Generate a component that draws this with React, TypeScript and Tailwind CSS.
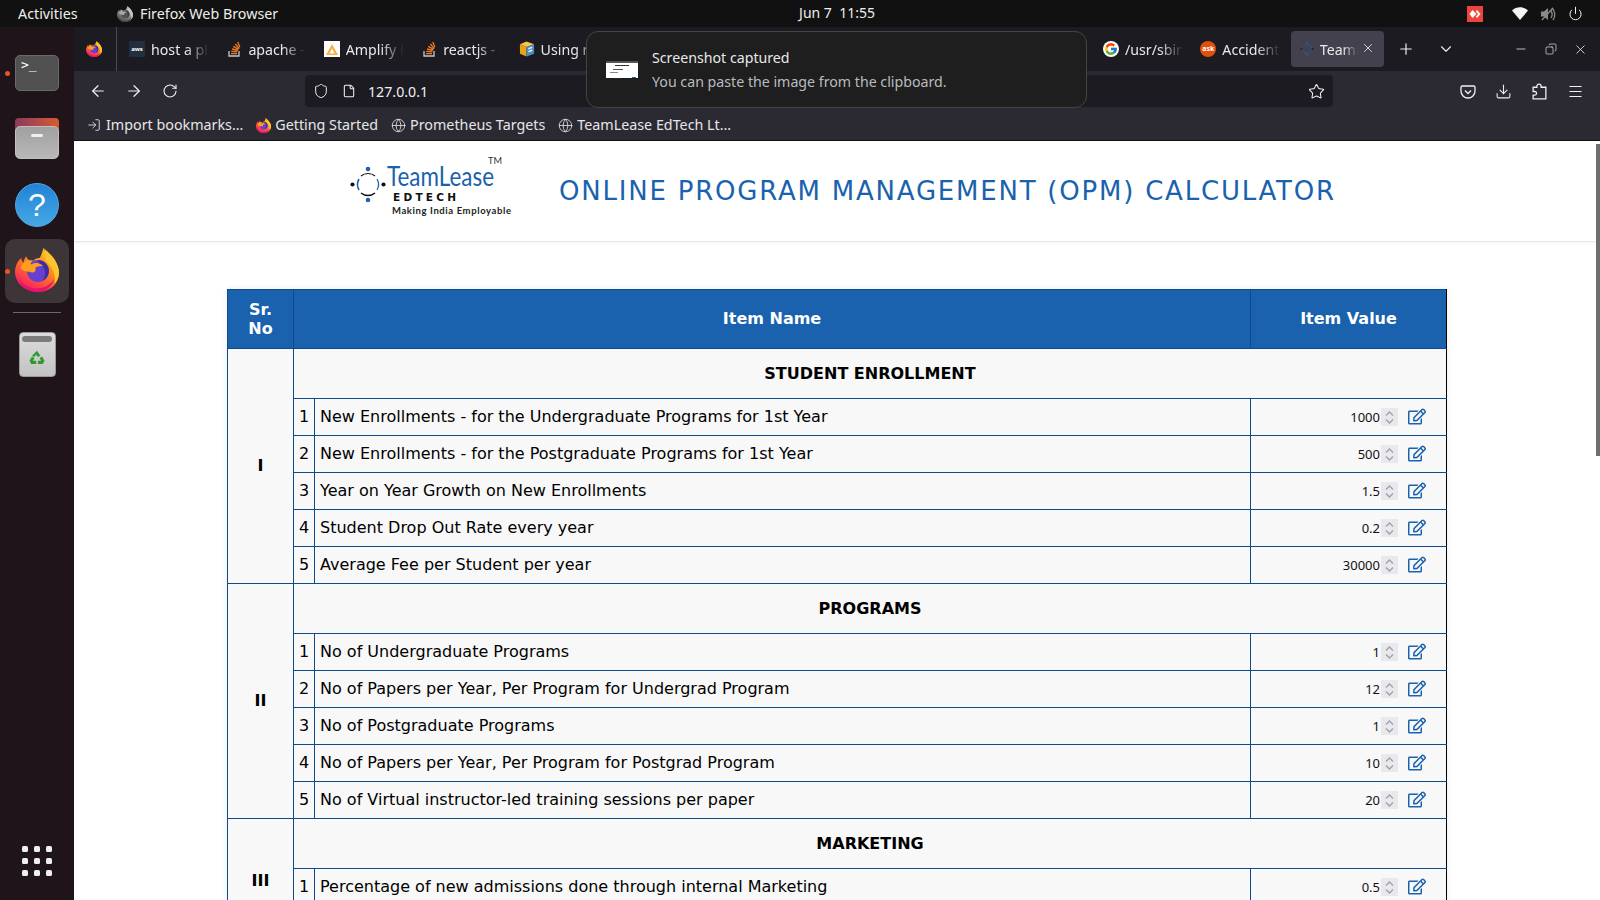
import React from "react";
import { ArrowLeft, ArrowRight, RotateCw, Shield, File, Star, Download, Menu, Globe, X, Plus, ChevronDown, Minus, Copy, LogIn, Power } from "lucide-react";
import { FaRegEdit } from "react-icons/fa";
import { FcGoogle } from "react-icons/fc";

const ui = "font-['Noto_Sans','Open_Sans',sans-serif]";

function FirefoxIcon({ size = 16, muted = false }: { size?: number; muted?: boolean }) {
  return (
    <svg width={size} height={size} viewBox="0 0 48 48" className={muted ? "grayscale" : ""}>
      <defs>
        <linearGradient id="ffa" x1="0.85" y1="0.05" x2="0.3" y2="1">
          <stop offset="0" stopColor="#ffd02c" />
          <stop offset="0.5" stopColor="#ff7a1f" />
          <stop offset="1" stopColor="#f5156c" />
        </linearGradient>
      </defs>
      <path d="M31 0C32 6 40 10 44 15C47 20 48 24 48 27C48 39 38 48 25 48C11 48 0 38 0 26C0 20 3 14 7 11C7 14 8 15 9 16C10 13 11 11 12 9C13 12 16 14 19 15C21 12 24 11 27 11C29 7 30 4 31 0Z" fill="url(#ffa)" />
      <path d="M31 0C37 5 47 13 48 26C48 32 46 36 43 39C45 30 41 20 33 14C34 9 33 4 31 0Z" fill="#ffc52e" />
      <path d="M3 30C6 40 16 45 26 44C34 43 40 39 43 33C41 42 33 48 25 48C14 48 5 41 3 30Z" fill="#e8116f" />
      <circle cx="25" cy="25" r="12" fill="#6a3fd0" />
      <path d="M25 13A12 12 0 0 1 37 25C37 30 34 34 30 36C34 31 34 23 29 19C27 17 25 16 25 13Z" fill="#2d2a8c" opacity="0.75" />
      <path d="M6 22C8 16 14 12 20 14C18 15 17 16 17 18C22 15 28 16 31 20C27 19 24 20 22 22C24 25 20 28 16 26C11 26 8 24 6 22Z" fill="#ff9f1f" />
    </svg>
  );
}

function Tab({ icon, label }: { icon: React.ReactNode; label: string }) {
  return (
    <div className="w-[97.4px] h-9 shrink-0 flex items-center pl-[7px] overflow-hidden">
      <span className="w-4 h-4 shrink-0 flex items-center justify-center">{icon}</span>
      <span className="ml-[6px] w-[58px] pt-[1px] overflow-hidden whitespace-nowrap text-[14.2px] text-[#e8e8ea] [mask-image:linear-gradient(to_right,black_60%,transparent)]">{label}</span>
    </div>
  );
}

function StackIcon() {
  return (
    <svg width="13" height="16" viewBox="0 0 13 16" fill="none" stroke="#ef7c22" strokeWidth="1.3">
      <path d="M1 10v5h10v-5" stroke="#c9c9c9" />
      <path d="M3 12.6h6M3.2 10.4l6 .5M4 8l5.800 1.500M5.300 5.400l5.200 3M7.400 3l3.800 4.600M9.800 1l2 5.200" />
    </svg>
  );
}

function BookmarkItem({ icon, label }: { icon: React.ReactNode; label: string }) {
  return (
    <div className="flex items-center gap-[4px] text-[14.3px] text-[#e6e6e8] whitespace-nowrap">
      <span className="w-4 h-4 flex items-center justify-center">{icon}</span>
      <span>{label}</span>
    </div>
  );
}

type Row = { name: string; value: string };
type Section = { roman: string; title: string; rows: Row[] };

const sections: Section[] = [
  {
    roman: "I",
    title: "STUDENT ENROLLMENT",
    rows: [
      { name: "New Enrollments - for the Undergraduate Programs for 1st Year", value: "1000" },
      { name: "New Enrollments - for the Postgraduate Programs for 1st Year", value: "500" },
      { name: "Year on Year Growth on New Enrollments", value: "1.5" },
      { name: "Student Drop Out Rate every year", value: "0.2" },
      { name: "Average Fee per Student per year", value: "30000" },
    ],
  },
  {
    roman: "II",
    title: "PROGRAMS",
    rows: [
      { name: "No of Undergraduate Programs", value: "1" },
      { name: "No of Papers per Year, Per Program for Undergrad Program", value: "12" },
      { name: "No of Postgraduate Programs", value: "1" },
      { name: "No of Papers per Year, Per Program for Postgrad Program", value: "10" },
      { name: "No of Virtual instructor-led training sessions per paper", value: "20" },
    ],
  },
  {
    roman: "III",
    title: "MARKETING",
    rows: [
      { name: "Percentage of new admissions done through internal Marketing", value: "0.5" },
      { name: "Percentage of new admissions done through external Marketing", value: "0.5" },
    ],
  },
];

function ValueCell({ value }: { value: string }) {
  return (
    <div className="flex items-center justify-end pr-[20px]">
      <span className="text-[13px] leading-none text-[#111] font-['Noto_Sans',sans-serif] pr-[1px] pt-[1px]">{value}</span>
      <span className="w-[17px] h-[18px] bg-[#e9e9ed] flex items-center justify-center">
        <svg width="9" height="13" viewBox="0 0 9 13" fill="none" stroke="#a0a0ab" strokeWidth="1.4">
          <path d="M1 4.500l3.500-3.500 3.500 3.500M1 8.500l3.500 3.500 3.500-3.500" />
        </svg>
      </span>
      <FaRegEdit className="ml-[10px] text-[#1a62ad] w-[18px] h-[17px] -mt-[2px]" />
    </div>
  );
}

function Logo() {
  return (
    <svg width="173" height="70" viewBox="0 0 173 70" className="shrink-0">
      <circle cx="21" cy="13" r="2.300" fill="#1a62ad" />
      <circle cx="21" cy="44" r="2.300" fill="#1a62ad" />
      <circle cx="5.500" cy="28.500" r="2.100" fill="#111" />
      <circle cx="36.500" cy="28.500" r="2.100" fill="#111" />
      <path d="M14 20a11 11 0 0 1 14 0" fill="none" stroke="#111" strokeWidth="1.200" />
      <path d="M12 23a11 11 0 0 0 0 11" fill="none" stroke="#1a62ad" strokeWidth="1.600" />
      <path d="M14 37a11 11 0 0 0 14 0" fill="none" stroke="#111" strokeWidth="1.600" />
      <path d="M30 23a11 11 0 0 1 0 11" fill="none" stroke="#1a62ad" strokeWidth="1.200" />
      <text x="40" y="29.500" fontFamily="Lato, sans-serif" fontWeight="400" fontSize="27" fill="#1a62ad" textLength="107" lengthAdjust="spacingAndGlyphs">TeamLease</text>
      <text x="141" y="8" fontFamily="Lato, sans-serif" fontSize="9" fill="#333" textLength="14" lengthAdjust="spacingAndGlyphs">TM</text>
      <text x="46" y="44.500" fontFamily="DejaVu Sans, sans-serif" fontWeight="700" fontSize="10.500" fill="#111" textLength="68" letterSpacing="5">EDTECH</text>
      <text x="45" y="58" fontFamily="Lato, sans-serif" fontWeight="700" fontSize="9.500" fill="#222" textLength="119" lengthAdjust="spacing">Making India Employable</text>
    </svg>
  );
}

export default function App() {
  return (
    <div className={`w-[1600px] h-[900px] overflow-hidden relative flex flex-col bg-white ${ui}`}>
      {/* Top bar */}
      <div className="h-[27px] shrink-0 bg-[#111111] text-[#eeeeec] text-[14.3px] relative flex items-center">
        <span className="ml-[18px] w-[62px] whitespace-nowrap">Activities</span>
        <span className="ml-[37px] mr-[7px]"><FirefoxIcon size={16} muted /></span>
        <span className="w-[140px] whitespace-nowrap">Firefox Web Browser</span>
        <span className="ml-[517px] w-[80px] text-center whitespace-pre text-[14px] pb-[2px]">Jun 7  11:55</span>
        <div className="ml-auto flex items-center pr-[17px]">
          <span className="w-4 h-4 bg-[#ef443b] flex items-center justify-center">
            <svg width="12" height="10" viewBox="0 0 12 10" fill="#fff"><path d="M3.500 1l4 4-4 4-3-4zM8 1l3.500 4L8 9 6.800 7.800 9 5 6.800 2.300z" /></svg>
          </span>
          <svg width="16" height="13" viewBox="0 0 16 13" className="ml-[29px]" fill="#f5f5f5"><path d="M0 3.500C4.500-.8 11.500-.8 16 3.500L8 13z" /></svg>
          <svg width="16" height="14" viewBox="0 0 16 14" className="ml-[12px]" fill="#8a8a8a"><path d="M1 4.500h3L8 1v12L4 9.500H1z" /><path d="M10 3c2 2 3 5 1 8M12 1c3 3 4 8 1 12" fill="none" stroke="#8a8a8a" strokeWidth="1.300" /><path d="M2 13L13 1" stroke="#8a8a8a" strokeWidth="1.300" /></svg>
          <Power size={15} strokeWidth={1.600} className="ml-[12px] text-[#eeeeec]" />
        </div>
      </div>

      <div className="flex-1 flex min-h-0">
        {/* Dock */}
        <div className="w-[74px] shrink-0 bg-[#1e141a] flex flex-col items-center relative">
          <span className="absolute left-[5px] top-[44px] w-[5px] h-[5px] rounded-full bg-[#e95420]" />
          <span className="absolute left-[5px] top-[242px] w-[5px] h-[5px] rounded-full bg-[#e95420]" />
          <div className="mt-[28px] w-[44px] h-[36px] rounded-[5px] bg-[#505050] border border-[#6a6a6a] text-white text-[13px] leading-none pl-[5px] pt-[2px] font-['DejaVu_Sans_Mono',monospace]">&gt;_</div>
          <div className="mt-[27px] w-[44px] h-[41px] relative">
            <div className="absolute left-0 right-0 top-0 h-[20px] rounded-t-[4px] bg-gradient-to-r from-[#8a3a5a] to-[#d95a28]" />
            <div className="absolute left-0 right-0 top-[8px] bottom-0 rounded-[5px] bg-gradient-to-b from-[#a0a0a0] to-[#b8b8b8] border border-[#c0c0c0] flex justify-center">
              <span className="mt-[7px] w-[12px] h-[3px] bg-[#f0f0f0] rounded-sm" />
            </div>
          </div>
          <div className="mt-[24px] w-[44px] h-[44px] rounded-full bg-gradient-to-b from-[#2083d6] to-[#45a8e4] border border-[#58a7e0] flex items-center justify-center text-white text-[32px] leading-none font-['Liberation_Sans',sans-serif]">?</div>
          <div className="mt-[12px] w-[64px] h-[64px] rounded-[10px] bg-[#3d3538] flex items-center justify-center pb-[3px]">
            <FirefoxIcon size={44} />
          </div>
          <div className="mt-[9px] w-[48px] h-px bg-[#6d666a]" />
          <div className="mt-[19px] w-[37px] h-[45px] rounded-[4px] bg-gradient-to-b from-[#dcdcdc] to-[#c2c2c2] border border-[#999] flex flex-col items-center">
            <span className="mt-[3px] w-[30px] h-[6px] bg-[#7c7c7c] rounded-sm" />
            <svg width="20" height="20" viewBox="0 0 24 24" className="mt-[7px]" fill="#2e9a2e"><path d="M12 2l4 6-3 1.500-2-3-2 3L6 8zM3 14l3-5 3 2-2 3h4v4H5zM21 14l-3-5-3 2 2 3h-4v4h6z" /></svg>
          </div>
          <div className="mt-auto mb-[24px] grid grid-cols-3 gap-x-[6px] gap-y-[6px]">
            {Array.from({ length: 9 }).map((_, i) => (
              <span key={i} className="w-[6px] h-[6px] rounded-[1.500px] bg-[#efefef]" />
            ))}
          </div>
        </div>

        {/* Browser */}
        <div className="flex-1 min-w-0 flex flex-col relative">
          {/* Tabs */}
          <div className="h-[44px] shrink-0 bg-[#1c1b22] flex items-center relative">
            <span className="w-[42px] flex justify-center pr-[2px]"><FirefoxIcon size={16} /></span>
            <span className="w-px h-[44px] bg-[#4a4a52]" />
            <div className="w-[5px]" />
            <Tab label="host a platform" icon={<span className="w-4 h-4 bg-[#232f3e] text-[6px] leading-[16px] text-center text-white font-bold">aws</span>} />
            <Tab label="apache - how" icon={<StackIcon />} />
            <Tab label="Amplify Hosting" icon={<span className="w-4 h-4 bg-white flex items-center justify-center"><svg width="12" height="11" viewBox="0 0 12 11"><path d="M6 0l6 11H0z" fill="#fbb040" /><path d="M6 4.500l2.500 5h-5z" fill="#fff" /></svg></span>} />
            <Tab label="reactjs - how" icon={<StackIcon />} />
            <Tab label="Using npm" icon={<svg width="17" height="16" viewBox="0 0 17 16"><path d="M1 3l7-3 8 3-8 3z" fill="#f7c548" /><path d="M1 3l7 3v10l-7-3z" fill="#e8a317" /><path d="M8 6l8-3v10l-8 3z" fill="#4a90c2" /><path d="M10 7l4-1.500v1.500l-4 1.500zM10 10l4-1.500v1.500l-4 1.500z" fill="#fff" /></svg>} />
            <div className="w-[487px] shrink-0" />
            <Tab label="/usr/sbin/apache" icon={<span className="w-4 h-4 rounded-full bg-white flex items-center justify-center"><FcGoogle size={14} /></span>} />
            <Tab label="Accident rate" icon={<span className="w-4 h-4 rounded-full bg-[#e2500e] text-white text-[7px] font-bold leading-4 text-center">ask</span>} />
            <div className="w-[93px] h-[36px] shrink-0 rounded-[4px] bg-[#42414d] flex items-center pl-[9px] relative">
              <svg width="14" height="14" viewBox="0 0 14 14" fill="none"><circle cx="7" cy="7" r="4.500" stroke="#2a5590" strokeWidth="1" /><circle cx="7" cy="1.500" r="1" fill="#1a62ad" /><circle cx="7" cy="12.500" r="1" fill="#1a62ad" /><circle cx="1.500" cy="7" r="1" fill="#222" /><circle cx="12.500" cy="7" r="1" fill="#222" /></svg>
              <span className="ml-[6px] w-[38px] pt-[1px] overflow-hidden whitespace-nowrap text-[14.2px] text-[#e8e8ea] [mask-image:linear-gradient(to_right,black_60%,transparent)]">TeamLease</span>
              <X size={14} strokeWidth={1.500} className="absolute right-[9px] top-[10px] text-[#e8e8ea]" />
            </div>
            <Plus size={18} strokeWidth={1.600} className="ml-[13px] text-[#f0f0f0]" />
            <ChevronDown size={18} strokeWidth={1.500} className="ml-[22px] text-[#f0f0f0]" />
            <div className="ml-auto flex items-center pr-[12px] text-[#eeeeee]">
              <Minus size={14} strokeWidth={1.300} />
              <Copy size={12} strokeWidth={1.300} className="ml-[17px] -scale-x-100" />
              <X size={15} strokeWidth={1.300} className="ml-[16px]" />
            </div>
          </div>

          {/* Toolbar */}
          <div className="h-[36px] shrink-0 bg-[#2b2a33] flex items-start pt-[4px] text-[#f0f0f4]">
            <ArrowLeft size={18} strokeWidth={1.600} className="ml-[15px] mt-[7px]" />
            <ArrowRight size={18} strokeWidth={1.600} className="ml-[18px] mt-[7px]" />
            <RotateCw size={16} strokeWidth={1.600} className="ml-[19px] mt-[8px]" />
            <div className="ml-[127px] w-[1028px] h-[32px] shrink-0 rounded-[4px] bg-[#1c1b22] flex items-center">
              <Shield size={16} strokeWidth={1.500} className="ml-[8px]" />
              <File size={14} strokeWidth={1.800} className="ml-[13px]" />
              <span className="ml-[12px] text-[14.2px] pt-[1px] text-[#f0f0f4]">127.0.0.1</span>
              <Star size={17} strokeWidth={1.500} className="ml-auto mr-[8px]" />
            </div>
            <div className="ml-auto flex items-center gap-[19px] pr-[16px] pt-[8px]">
              <svg width="16" height="16" viewBox="0 0 16 16" fill="none" stroke="#f0f0f4" strokeWidth="1.300"><path d="M2.500 2h11A1.500 1.500 0 0 1 15 3.500V7A7 7 0 0 1 1 7V3.500A1.500 1.500 0 0 1 2.500 2z" /><path d="M5 6.500l3 3 3-3" /></svg>
              <Download size={17} strokeWidth={1.500} />
              <svg width="17" height="17" viewBox="0 0 14 16" fill="none" stroke="#f0f0f4" strokeWidth="1.200"><path d="M4.500 4V3a2 2 0 0 1 4 0v1H13v11H1v-3.500h1.500a1.700 1.700 0 0 0 0-3.500H1V4z" /></svg>
              <Menu size={17} strokeWidth={1.500} />
            </div>
          </div>

          {/* Bookmarks */}
          <div className="h-[34px] shrink-0 bg-[#2b2a33] border-b border-[#111] flex items-center pl-[12px] gap-[12px] pt-[3px]">
            <BookmarkItem label="Import bookmarks…" icon={<LogIn size={14} strokeWidth={1.500} />} />
            <BookmarkItem label="Getting Started" icon={<FirefoxIcon size={15} />} />
            <BookmarkItem label="Prometheus Targets" icon={<Globe size={15} strokeWidth={1.300} />} />
            <BookmarkItem label="TeamLease EdTech Lt…" icon={<Globe size={15} strokeWidth={1.300} />} />
          </div>

          {/* Page */}
          <div className="flex-1 min-h-0 overflow-hidden bg-white font-['DejaVu_Sans',sans-serif]">
            <div className="h-[101px] border-b border-[#e8e8e8] shadow-[0_1px_3px_rgba(0,0,0,0.05)] flex items-center pl-[273px]">
              <Logo />
              <h1 className="ml-[39px] text-[26px] font-normal tracking-[1.780px] text-[#1a62ad] whitespace-nowrap">ONLINE PROGRAM MANAGEMENT (OPM) CALCULATOR</h1>
            </div>
            <div className="pl-[153px] pt-[47px]">
              <table className="w-[1219px] table-fixed border-collapse bg-[#f8f8f8] text-black text-[16px] border-r border-r-black shadow-[0_0_6px_rgba(0,0,0,0.08)]">
                <colgroup>
                  <col className="w-[66px]" />
                  <col className="w-[21px]" />
                  <col className="w-[936px]" />
                  <col className="w-[196px]" />
                </colgroup>
                <thead>
                  <tr className="h-[59px] bg-[#1a62ad] text-white font-bold">
                    <th className="border border-[#0f4a8a] px-2 leading-[19px]">Sr. No</th>
                    <th colSpan={2} className="border border-[#0f4a8a]">Item Name</th>
                    <th className="border border-[#0f4a8a] border-r-black">Item Value</th>
                  </tr>
                </thead>
                <tbody>
                  {sections.map((s) => (
                    <React.Fragment key={s.roman}>
                      <tr className="h-[50px]">
                        <td rowSpan={s.rows.length + 1} className="border border-[#0f4a8a] text-center font-bold">{s.roman}</td>
                        <td colSpan={3} className="border border-[#0f4a8a] border-r-black text-center font-bold">{s.title}</td>
                      </tr>
                      {s.rows.map((r, i) => (
                        <tr key={i} className="h-[37px]">
                          <td className="border border-[#0f4a8a] text-center p-0">{i + 1}</td>
                          <td className="border border-[#0f4a8a] px-[5px]">{r.name}</td>
                          <td className="border border-[#0f4a8a] border-r-black p-0"><ValueCell value={r.value} /></td>
                        </tr>
                      ))}
                    </React.Fragment>
                  ))}
                </tbody>
              </table>
            </div>
          </div>

          {/* Notification */}
          <div className="absolute left-[512px] top-[4px] w-[501px] h-[77px] rounded-[12px] bg-[#1e1e1e] border border-[#444] flex items-center">
            <div className="ml-[19px] w-[32px] h-[17px] bg-white relative overflow-hidden">
              <div className="absolute left-0 top-0 w-full h-[2px] bg-[#555]" />
              <div className="absolute left-[9px] top-[4px] w-[14px] h-px bg-[#333]" />
              <div className="absolute left-[7px] top-[8px] w-[10px] h-px bg-[#555]" />
              <div className="absolute left-[4px] top-[11px] w-[8px] h-px bg-[#888]" />
              <div className="absolute right-[2px] bottom-0 w-[4px] h-[1px] bg-[#1a62ad]" />
            </div>
            <div className="ml-[14px] flex flex-col text-[14.2px] leading-[24px]">
              <span className="text-[#e8e8e8]">Screenshot captured</span>
              <span className="text-[#b8bcc0]">You can paste the image from the clipboard.</span>
            </div>
          </div>

          {/* Scrollbar */}
          <div className="absolute right-0 top-[117px] w-[4px] h-[312px] bg-[#6e6e6e]" />
        </div>
      </div>
    </div>
  );
}
